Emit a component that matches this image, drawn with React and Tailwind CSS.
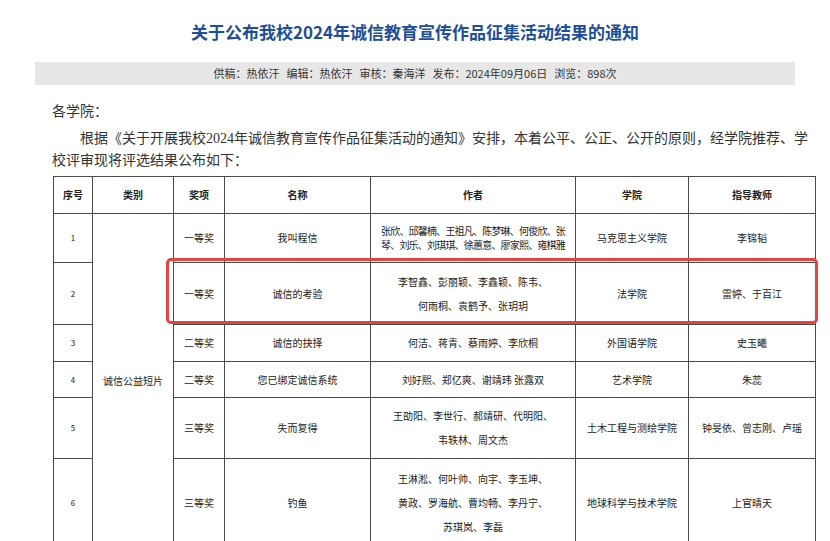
import React from "react";

const rows = [
  {
    no: "1",
    award: "一等奖",
    name: "我叫程信",
    authors: ["张欣、邱馨楠、王祖凡、陈梦琳、何俊欣、张", "琴、刘乐、刘琪琪、徐蕙意、廖家熙、雍棋雅"],
    tight: true,
    college: "马克思主义学院",
    teacher: "李锦韬",
    h: "h-[49px]",
  },
  {
    no: "2",
    award: "一等奖",
    name: "诚信的考验",
    authors: ["李智鑫、彭丽颖、李鑫颖、陈韦、", "何雨桐、袁鹤予、张玥玥"],
    college: "法学院",
    teacher: "雷婷、于百江",
    h: "h-[62px]",
  },
  {
    no: "3",
    award: "二等奖",
    name: "诚信的抉择",
    authors: ["何洁、蒋青、蔡雨婷、李欣桐"],
    college: "外国语学院",
    teacher: "史玉曦",
    h: "h-[37px]",
  },
  {
    no: "4",
    award: "二等奖",
    name: "您已绑定诚信系统",
    authors: ["刘好熙、郑亿爽、谢靖玮 张露双"],
    college: "艺术学院",
    teacher: "朱蕊",
    h: "h-[36px]",
  },
  {
    no: "5",
    award: "三等奖",
    name: "失而复得",
    authors: ["王劭阳、李世行、郝靖研、代明阳、", "韦轶林、周文杰"],
    college: "土木工程与测绘学院",
    teacher: "钟旻依、曾志刚、卢瑶",
    h: "h-[61px]",
  },
  {
    no: "6",
    award: "三等奖",
    name: "钓鱼",
    authors: ["王淋淞、何叶帅、向宇、李玉坤、", "黄政、罗海航、曹均畅、李丹宁、", "苏琪岚、李磊"],
    college: "地球科学与技术学院",
    teacher: "上官晴天",
    h: "h-[89px]",
  },
];

const cell = "border border-[#4a4a4a] text-center align-middle p-0";

export default function App() {
  return (
    <div className="w-[830px] h-[541px] overflow-hidden bg-white text-[#333] font-['Noto_Sans_CJK_SC',sans-serif]">
      <h1 className="pt-[20px] text-center text-[17px] font-bold leading-[24px] text-[#1c4e9a]">
        关于公布我校2024年诚信教育宣传作品征集活动结果的通知
      </h1>

      <div className="mx-[35px] mt-[18px] flex h-[23px] items-center justify-center gap-[7px] bg-[#e7e7e7] text-[11px] text-[#333]">
        <span>供稿：热依汗</span>
        <span>编辑：热依汗</span>
        <span>审核：秦海洋</span>
        <span>发布：2024年09月06日</span>
        <span>浏览：898次</span>
      </div>

      <div className="pl-[52px] pr-[14px] pt-[16px] font-['Liberation_Serif','Noto_Sans_CJK_SC',serif] text-[14px] leading-[22px] text-[#333]">
        <p>各学院：</p>
        <p className="mt-[5px] indent-[2em]">
          根据《关于开展我校2024年诚信教育宣传作品征集活动的通知》安排，本着公平、公正、公开的原则，经学院推荐、学
          <br />
          校评审现将评选结果公布如下：
        </p>

        <div className="relative mt-[4px] ml-px">
          <table className="w-[762px] table-fixed border-collapse font-['Noto_Sans_CJK_SC',sans-serif] text-[10px] leading-[14px] text-[#222]">
            <colgroup>
              <col className="w-[39px]" />
              <col className="w-[81px]" />
              <col className="w-[51px]" />
              <col className="w-[146px]" />
              <col className="w-[205px]" />
              <col className="w-[113px]" />
              <col className="w-[127px]" />
            </colgroup>
            <thead>
              <tr className="h-[37px] font-bold">
                <th className={cell}>序号</th>
                <th className={cell}>类别</th>
                <th className={cell}>奖项</th>
                <th className={cell}>名称</th>
                <th className={cell}>作者</th>
                <th className={cell}>学院</th>
                <th className={cell}>指导教师</th>
              </tr>
            </thead>
            <tbody>
              {rows.map((r, i) => (
                <tr key={r.no} className={r.h}>
                  <td className={`${cell} text-[8px]`}>{r.no}</td>
                  {i === 0 && (
                    <td className={cell} rowSpan={6}>
                      诚信公益短片
                    </td>
                  )}
                  <td className={cell}>{r.award}</td>
                  <td className={cell}>{r.name}</td>
                  <td className={`${cell} whitespace-nowrap`}>
                    {r.authors.map((line) => (
                      <div
                        key={line}
                        className={r.tight ? "leading-[14px] tracking-[-0.8px]" : "leading-[24px]"}
                      >
                        {line}
                      </div>
                    ))}
                  </td>
                  <td className={cell}>{r.college}</td>
                  <td className={cell}>{r.teacher}</td>
                </tr>
              ))}
            </tbody>
          </table>

          <div className="pointer-events-none absolute left-[113px] top-[82px] h-[66px] w-[652px] rounded-[5px] border-[3px] border-[#e8423f]" />
        </div>
      </div>
    </div>
  );
}
